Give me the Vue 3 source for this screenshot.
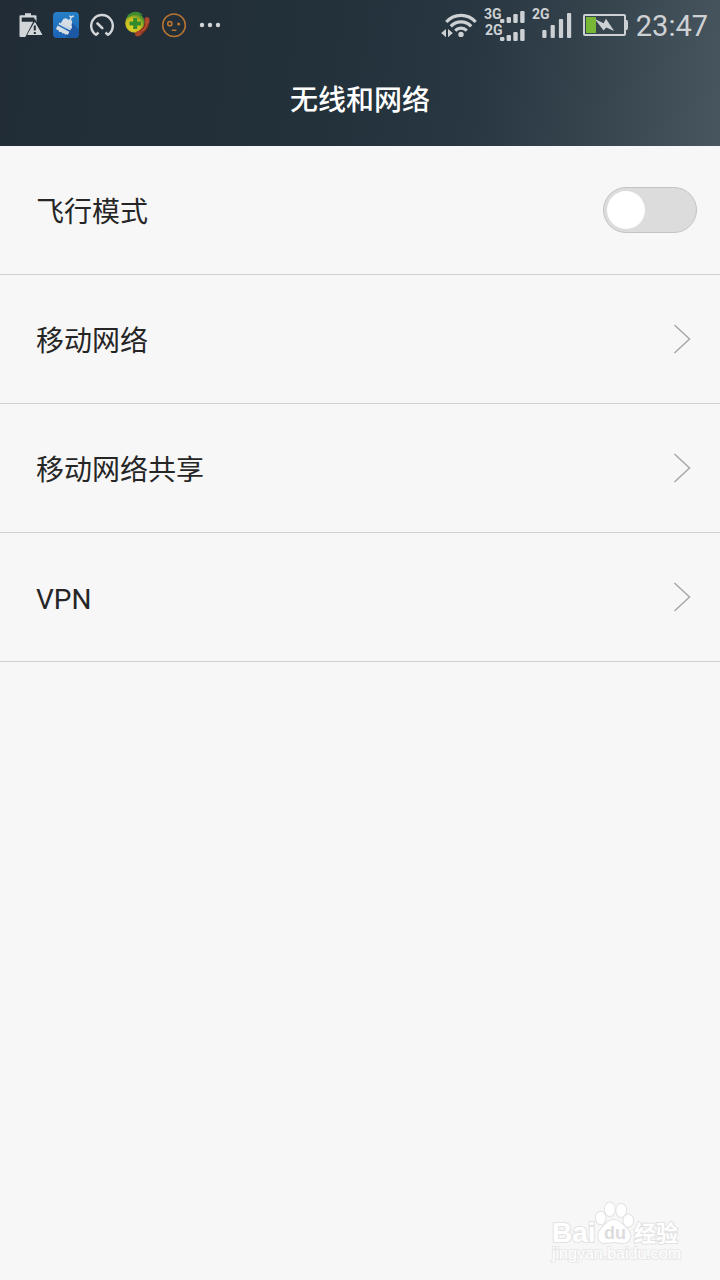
<template>
  <div class="screen">
    <header class="header">
      <div class="status-bar">
        <div class="notifications">
          <!-- Battery warning -->
          <svg class="notice" viewBox="0 0 36 50">
            <path d="M13 13.2h6v2h4.500q1 0 1 1V36q0 1-1 1h-15q-1 0-1-1V16.200q0-1 1-1H13zM9.700 17.600V21.800H22.300V17.600z" fill="#d3d6d9" fill-rule="evenodd" />
            <path d="M22.800 18.500 13 37.500h20z" fill="#222e37" />
            <path d="M22.800 22.500 15.800 34.500h14z" fill="#d3d6d9" stroke="#d3d6d9" stroke-linejoin="round" />
            <path d="M22.800 25.500v5M22.800 32v2" stroke="#222e37" stroke-width="2" />
          </svg>
          <!-- Cleaner -->
          <svg class="notice" viewBox="0 0 36 50">
            <defs>
              <linearGradient id="cleaner" x1="0" y1="0" x2="0" y2="1">
                <stop offset="0" stop-color="#2680c8" />
                <stop offset="1" stop-color="#1d62b4" />
              </linearGradient>
            </defs>
            <rect x="5" y="12" width="26" height="26" rx="4" fill="url(#cleaner)" />
            <path d="M24 23 31 30v4q0 4-4 4h-7l-5-5z" fill="#1b57a2" />
            <path d="m22 20.500 1.200-3.500-1.700-1.200M23.200 17l2.600-1" fill="none" stroke="#d5dde5" stroke-width="1.500" />
            <path d="m15.500 18.800 2.500-.6 2.500 1.600 2.500-.2 1.300 2.200-.8 3 .6 2.600-1 1.600-10.500-5.500z" fill="#d5dde5" />
            <path d="m10.500 24.200 1-1.600 11.500 6.300-.8 1.600z" fill="#d5dde5" />
            <path d="m9.700 25.600 11.600 6.200-1.300 3-1.600-.6-1 .5-1.500-1.400-1.500.2-1-1.400-2-.2-.8-1.400-2.700-1.400z" fill="#d5dde5" />
          </svg>
          <!-- Speed gauge -->
          <svg class="notice" viewBox="0 0 36 50">
            <path d="M14.500 32.500 12 34.800A10.800 10.800 0 1 1 24 34.800L21.500 32.500" fill="none" stroke="#d3d6d9" stroke-width="2.400" stroke-linejoin="round" />
            <path d="m13.500 23.500 4.800 4.600" stroke="#d3d6d9" stroke-width="2.600" stroke-linecap="round" />
          </svg>
          <!-- Phone guard -->
          <svg class="notice" viewBox="0 0 36 50">
            <defs>
              <radialGradient id="guard" cx="0.4" cy="0.65" r="0.6">
                <stop offset="0" stop-color="#e2d52b" />
                <stop offset="0.65" stop-color="#c9bd20" />
                <stop offset="1" stop-color="#4d922d" />
              </radialGradient>
            </defs>
            <circle cx="15" cy="23" r="9.800" fill="url(#guard)" />
            <path d="M6 19a9.800 9.800 0 0 1 17-3.500Q14 12.500 6 19z" fill="#3f8b31" />
            <path d="M13.200 18h4v3.500H21v4h-3.800V29h-4v-3.500H9.500v-4h3.700z" fill="#338a2c" />
            <path d="M27 20.500Q27.500 29.500 18 33.500" fill="none" stroke="#8c321b" stroke-width="4.600" stroke-linecap="round" />
            <path d="M27 19.500v2M17.500 34l1.500-.5" stroke="#a8452a" stroke-width="5" stroke-linecap="round" />
            <path d="M27.500 19.500Q27.500 27.500 21.500 31.500" fill="none" stroke="#b9583a" stroke-width="1.200" />
          </svg>
          <!-- Face -->
          <svg class="notice" viewBox="0 0 36 50">
            <g fill="none" stroke="#b97430">
              <circle cx="18" cy="25.300" r="11.300" stroke-width="1.500" />
              <circle cx="13.800" cy="23.700" r="2.100" stroke-width="1.600" />
              <path d="M15.800 30.300h4.600" stroke-width="1.500" />
            </g>
            <circle cx="22.700" cy="24" r="1.600" fill="#b97430" />
          </svg>
          <!-- More -->
          <svg class="notice" viewBox="0 0 36 50" fill="#d3d6d9">
            <circle cx="10" cy="25" r="2.200" />
            <circle cx="18" cy="25" r="2.200" />
            <circle cx="26" cy="25" r="2.200" />
          </svg>
        </div>

        <div class="system">
          <!-- Wi-Fi -->
          <svg class="wifi" viewBox="0 0 38 50">
            <g fill="none" stroke="#ced1d4" stroke-width="3.200">
              <path d="M6.300 22A19.500 19.500 0 0 1 35.700 22" />
              <path d="M10.800 26.400A13.800 13.800 0 0 1 31.200 26.400" />
              <path d="M15.200 30.600A8.200 8.200 0 0 1 26.800 30.600" />
            </g>
            <circle cx="21" cy="34.400" r="2.700" fill="#ced1d4" />
            <path d="M6 29v8.200L1.200 33zM8 29v8.200l4.800-4.200z" fill="#ced1d4" />
          </svg>
          <!-- First SIM -->
          <svg class="dual-signal" viewBox="0 0 42 50" fill="#ced1d4">
            <text class="network" x="0" y="19">3G</text>
            <text class="network" x="1" y="35">2G</text>
            <rect v-for="bar in dualBars" :key="bar.x + '-' + bar.y" :x="bar.x" :y="bar.y" width="4.400" :height="bar.h" rx="1.200" />
          </svg>
          <!-- Second SIM -->
          <svg class="signal" viewBox="0 0 40 50" fill="#ced1d4">
            <text class="network" x="0" y="19">2G</text>
            <rect v-for="bar in bars" :key="bar.x" :x="bar.x" :y="bar.y" width="4.200" :height="bar.h" rx="1" />
          </svg>
          <!-- Battery -->
          <svg class="battery" viewBox="0 0 52 50">
            <rect x="6" y="15" width="41" height="20" rx="1" fill="none" stroke="#ced1d4" stroke-width="2" />
            <path d="M48 20h1.500v1.500h.5v7h-.5V30H48z" fill="#ced1d4" />
            <rect x="8" y="17" width="10" height="16" fill="#77b735" />
            <path d="m16.800 19 8.800 4.200 2.400-4.500 4 6 4.200 6.200-8-3.500-2.600 3.200z" fill="#ced1d4" />
          </svg>
          <time class="clock">23:47</time>
        </div>
      </div>
      <h1 class="title">无线和网络</h1>
    </header>

    <main class="list">
      <label class="row">
        <span class="label">飞行模式</span>
        <input v-model="airplaneMode" class="switch" type="checkbox" role="switch" />
      </label>
      <a v-for="item in items" :key="item" class="row" href="#">
        <span class="label">{{ item }}</span>
        <svg class="chevron" viewBox="0 0 24 30">
          <path d="M1.500 1 16.500 15 1.500 29" />
        </svg>
      </a>
    </main>

    <svg class="watermark" viewBox="0 0 160 80">
      <text class="brand" x="12" y="52">Bai</text>
      <g class="paw">
        <ellipse cx="60.700" cy="28" rx="4.800" ry="6.200" />
        <ellipse cx="69.800" cy="19.300" rx="4.900" ry="6.700" />
        <ellipse cx="81.200" cy="20.400" rx="4.900" ry="6.600" />
        <ellipse cx="88.300" cy="30.600" rx="4.800" ry="6.200" />
        <path d="M74 30C80 30 83 35 87 39 93 45 90 53 83 53 79 53 78 52 74 52 70 52 69 53 65 53 58 53 56 45 61 39 65 35 68 30 74 30z" />
      </g>
      <text class="du" x="64" y="49">du</text>
      <text class="cjk" x="94" y="51">经验</text>
      <text class="url" x="12" y="69">jingyan.baidu.com</text>
    </svg>
  </div>
</template>

<script setup>
import { ref } from 'vue'

const airplaneMode = ref(false)

const items = ['移动网络', '移动网络共享', 'VPN']

// Signal strength bars
const dualBars = [
  { x: 16, y: 19, h: 4 },
  { x: 22.600, y: 17, h: 6 },
  { x: 29.300, y: 14, h: 9 },
  { x: 36.200, y: 11, h: 12 },
  { x: 16, y: 37, h: 4 },
  { x: 22.600, y: 35, h: 6 },
  { x: 29.300, y: 32, h: 9 },
  { x: 36.200, y: 29, h: 12 }
]

const bars = [
  { x: 10.300, y: 30, h: 8 },
  { x: 18.600, y: 25, h: 13 },
  { x: 26.900, y: 19, h: 19 },
  { x: 35, y: 13, h: 25 }
]
</script>

<style>
body {
  background: #f7f7f7;
}
</style>

<style scoped>
.screen {
  position: relative;
  min-height: 100vh;
  background: #f7f7f7;
  font-family: Roboto, 'Noto Sans CJK SC', sans-serif;
}

/* Header */
.header {
  background: linear-gradient(97deg, #212c36 0%, #23313b 45%, #283741 66%, #36444e 82%, #485660 100%);
}

.status-bar {
  display: flex;
  justify-content: space-between;
  height: 50px;
  padding: 0 12px;
}

.notifications {
  display: flex;
}

.notice {
  width: 36px;
  height: 50px;
}

.system {
  display: flex;
  gap: 6px;
}

.wifi {
  width: 38px;
  height: 50px;
}

.dual-signal {
  width: 42px;
  height: 50px;
}

.signal {
  width: 40px;
  height: 50px;
}

.battery {
  width: 52px;
  height: 50px;
}

.network {
  font-size: 14px;
  font-weight: 700;
}

.clock {
  color: #ced1d4;
  font-size: 29px;
  line-height: 52px;
}

.title {
  margin: 0;
  padding-top: 6px;
  color: #fff;
  font-size: 28px;
  font-weight: 500;
  line-height: 90px;
  text-align: center;
}

/* Settings list */
.row {
  display: flex;
  align-items: center;
  justify-content: space-between;
  height: 128px;
  padding: 0 23px 0 36px;
  border-bottom: 1px solid #cfcfcf;
  color: #262626;
  text-decoration: none;
}

.label {
  padding-top: 6px;
  font-size: 28px;
  line-height: 40px;
}

.switch {
  appearance: none;
  box-sizing: border-box;
  width: 94px;
  height: 46px;
  margin: 0;
  padding: 3px;
  border: 1px solid #c4c4c4;
  border-radius: 23px;
  background: #dcdcdc;
}

.switch::before {
  content: '';
  display: block;
  width: 38px;
  height: 38px;
  border-radius: 50%;
  background: #fff;
}

.switch:checked {
  background: #77b735;
}

.switch:checked::before {
  margin-left: auto;
}

.chevron {
  width: 24px;
  height: 30px;
  fill: none;
  stroke: #a8a8a8;
  stroke-width: 1.5;
}

/* Watermark */
.watermark {
  position: absolute;
  right: 20px;
  bottom: 10px;
  width: 160px;
  height: 80px;
  fill: #fff;
  stroke: #e2e2e2;
  stroke-width: 2;
  paint-order: stroke;
  pointer-events: none;
}

.brand {
  font: 700 28px 'Liberation Sans', sans-serif;
}

.du {
  fill: #dcdcdc;
  stroke: none;
  font: 700 18px 'Liberation Sans', sans-serif;
}

.cjk {
  font: 700 22px 'Noto Sans CJK SC', sans-serif;
}

.url {
  font: 400 16px 'Liberation Sans', sans-serif;
  stroke: #e8e8e8;
}
</style>
